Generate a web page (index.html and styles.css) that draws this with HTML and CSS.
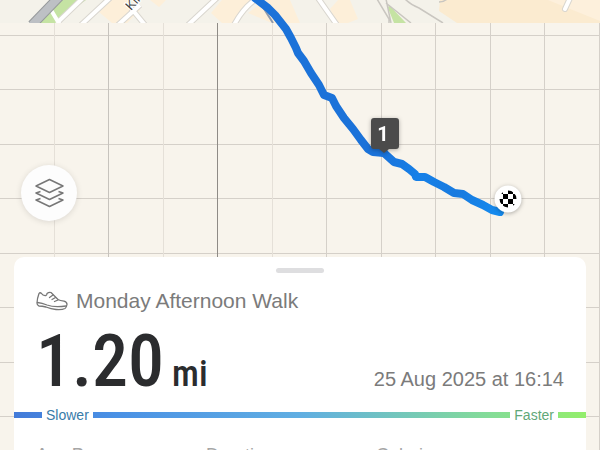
FILE: index.html
```html
<!DOCTYPE html>
<html lang="en">
<head>
    <meta charset="UTF-8">
    <meta name="viewport" content="width=device-width, initial-scale=1.0">
    <title>Monday Afternoon Walk</title>
    <link rel="stylesheet" href="styles.css">
</head>
<body>
    <div class="screen">
        <svg class="map" viewBox="0 0 600 450" preserveAspectRatio="xMidYMin slice" role="img" aria-label="Route map">
            <defs>
                <clipPath id="tiles"><rect width="600" height="23"/></clipPath>
                <linearGradient id="pace" gradientUnits="userSpaceOnUse" x1="380" y1="150" x2="500" y2="212">
                    <stop offset="0" stop-color="#1a72da"/>
                    <stop offset="0.35" stop-color="#1680e8"/>
                    <stop offset="0.65" stop-color="#187adf"/>
                    <stop offset="1" stop-color="#158bef"/>
                </linearGradient>
                <clipPath id="flag"><circle cx="508" cy="199" r="8.5"/></clipPath>
            </defs>
            <rect width="600" height="450" fill="#f8f4ec"/>

            <!-- grid -->
            <g stroke="#d5d0c9" stroke-width="1">
                <path d="M0 35.5H600M0 89.5H600M0 144.5H600M0 198.5H600M0 253.5H600M0 307.5H600M0 362.5H600M0 416.5H600"/>
                <path d="M326.5 23V450M381.5 23V450M435.5 23V450M490.5 23V450M544.5 23V450M599.5 23V450"/>
                <path stroke="#e5e0d8" d="M54.5 23V450M163.5 23V450M272.5 23V450"/>
                <path stroke="#c7c3bd" d="M108.5 23V450"/>
                <path stroke="#8f8b86" d="M217.5 23V450"/>
            </g>

            <!-- streets -->
            <g clip-path="url(#tiles)">
                <rect width="600" height="23" fill="#f4f2ea"/>
                <path fill="#fdefd9" d="M112 0H130L140 10 127 23H112L99 12ZM150 0H166L159 7ZM222 0H254L232 23H222L211 13ZM265 0H290L300 23H272L248 13ZM338 0H350L358 19 348 23H337L330 9Z"/>
                <path fill="#fbebd0" d="M440 0H600V23H457L439 11Z"/>
                <path fill="#fdf0dc" d="M548 0H600V21Z"/>
                <path fill="#c5e3a3" d="M61 0H86L55 23H39ZM389 5L406 23H394L388 8Z"/>
                <g fill="none" stroke="#d9d6cf" stroke-width="6">
                    <path d="M85 -4L57 23M110 -2L81 25M140 5L118 25M131 8L145 25M219 -4L188 25M256 -1Q243 8 234 25M318 -2Q327 11 337 25"/>
                    <path stroke-linecap="round" d="M571 -4L565 9"/>
                </g>
                <g fill="none" stroke="#fff" stroke-width="4">
                    <path d="M51 10L60 25M85 -4L57 23M110 -2L81 25M140 5L118 25M131 8L145 25M219 -4L188 25M256 -1Q243 8 234 25M318 -2Q327 11 337 25"/>
                    <path stroke-linecap="round" d="M571 -4L565 9"/>
                </g>
                <path fill="none" stroke="#96999b" stroke-width="10" d="M60 -4L32 25"/>
                <path fill="none" stroke="#bdc0c4" stroke-width="8" d="M60 -4L32 25"/>
                <path fill="none" stroke="#c9c6c0" stroke-width="1.5" d="M377 -1L389 19V23M386 -1L391 23M386 3L411 23M405 -1Q411 5 419 8L443 23M439 2Q444 2 447 -1"/>
                <path fill="none" stroke="#8f9aac" stroke-width="2" d="M261 4L273 23"/>
                <text class="street" transform="translate(131 11) rotate(-48)">Kin</text>
            </g>

            <!-- walked route -->
            <g fill="none" stroke-width="8" stroke-linecap="round" stroke-linejoin="round">
                <path stroke="#1b72d9" d="M255 -2L268 8 275 15 286 29 291 38 296 48 298 53 304 61 311 73 319 85 324 95 332 98 336 106 344 118 353 129 361 140 368 149 373 152 384 153"/>
                <path stroke="url(#pace)" d="M384 153L394 162 402 164 409 169 415 174 416 177 425 177 434 182 444 187 454 193 463 194 472 200 483 205 492 210 500 212"/>
            </g>

            <g class="pin">
                <path fill="#4b4b4b" d="M374 118H396Q399 118 399 121V146Q399 149 396 149H389L384 153 379 149H374Q371 149 371 146V121Q371 118 374 118Z"/>
                <text class="pin-text" x="383" y="141" text-anchor="middle">1</text>
            </g>
            <g class="pin">
                <circle cx="508" cy="199" r="13.5" fill="#fff"/>
            </g>
            <g clip-path="url(#flag)">
                <path fill="#000" d="M498 189h5v5h-5zM508 189h5v5h-5zM503 194h5v5h-5zM513 194h5v5h-5zM498 199h5v5h-5zM508 199h5v5h-5zM503 204h5v5h-5zM513 204h5v5h-5z"/>
            </g>
        </svg>

        <button class="layers" type="button" aria-label="Map layers">
            <svg viewBox="0 0 56 56" fill="none" stroke="#777" stroke-width="1.5" stroke-linejoin="round">
                <path d="M28.500 14.500L42 21 28.500 27.500 15 21Z"/>
                <path d="M19.500 26.500L15 28 28.500 34.500 42 28 37.500 26.500"/>
                <path d="M19.500 33.500L15 35 28.500 41.500 42 35 37.500 33.500"/>
            </svg>
        </button>

        <main class="sheet">
            <div class="handle"></div>
            <div class="title">
                <svg class="shoe" viewBox="0 0 32 20" fill="none" stroke="#777" stroke-width="1.3" stroke-linecap="round" stroke-linejoin="round">
                    <path d="M3 2.500Q4 1 5.500 2.500 7 5 10 4.500 11 4 11 2.500 13 .8 15 1.500L22 8.500Q24 9.500 28 10.200 31 11 31 13.500 30.500 16.500 29 17.500 26 19 20 18.500 15 18 10 16 6 15 3 15 1 14.500 1 12 1 8 3 2.500Z"/>
                    <path d="M1.500 11.500Q6 12 11 14 18 16.500 30 15M13.500 6.500L17 4M16 8.500L19.500 6.500M18.500 10.500L22 9"/>
                </svg>
                <h1>Monday Afternoon Walk</h1>
            </div>
            <div class="summary">
                <p class="distance"><span>1.20</span> <span class="unit">mi</span></p>
                <time class="date" datetime="2025-08-25T16:14">25 Aug 2025 at 16:14</time>
            </div>
            <div class="pace">
                <span class="slower">Slower</span>
                <span class="faster">Faster</span>
            </div>
            <div class="stats">
                <span>Avg Pace</span>
                <span>Duration</span>
                <span>Calories</span>
            </div>
        </main>
    </div>
</body>
</html>
```
FILE: styles.css
```css
* {
    box-sizing: border-box;
    margin: 0;
    padding: 0;
}

body {
    font-family: "Liberation Sans", Arial, sans-serif;
    background-color: #f8f4ec;
    color: #7b7b7b;
}

.screen {
    position: relative;
    height: 100vh;
    overflow: hidden;
    padding: 165px 14px 0;
}

.map {
    position: absolute;
    top: 0;
    left: 0;
    width: 100%;
    height: 100%;
}

.street {
    font-size: 13px;
    fill: #444;
    stroke: #fff;
    stroke-width: 2px;
    paint-order: stroke;
}

.pin {
    filter: drop-shadow(0 1px 2px rgba(0, 0, 0, 0.3));
}

.pin-text {
    font-family: Roboto, sans-serif;
    font-size: 20px;
    font-weight: bold;
    fill: #fff;
}

.layers {
    position: relative;
    display: block;
    width: 56px;
    height: 56px;
    margin: 0 0 36px 7px;
    border: none;
    border-radius: 50%;
    background: #fdfdfd;
    box-shadow: 0 1px 6px rgba(0, 0, 0, 0.12);
    cursor: pointer;
}

.layers svg {
    display: block;
}

.sheet {
    position: relative;
    background: #fff;
    border-radius: 10px 10px 0 0;
    padding-top: 11px;
}

.handle {
    width: 48px;
    height: 5px;
    margin: 0 auto;
    border-radius: 3px;
    background: #dedee0;
}

.title {
    display: flex;
    align-items: center;
    gap: 8px;
    padding: 16px 22px 0;
}

.shoe {
    width: 32px;
    height: 20px;
}

.title h1 {
    font-size: 21px;
    line-height: 24px;
    font-weight: normal;
}

.summary {
    display: flex;
    justify-content: space-between;
    align-items: baseline;
    padding: 9px 22px 0;
}

.distance {
    display: flex;
    align-items: baseline;
    gap: 8px;
    font-family: "Roboto Condensed", "Liberation Sans Narrow", Roboto, sans-serif;
    font-size: 72px;
    line-height: 80px;
    font-weight: 500;
    color: #2b2c2e;
}

.unit {
    font-size: 36px;
    line-height: 36px;
}

.date {
    font-size: 20px;
}

.pace {
    display: flex;
    justify-content: space-between;
    align-items: center;
    height: 20px;
    margin-top: 3px;
    padding: 0 28px;
    background: linear-gradient(to right, #437bd9, #4a91e5 18%, #60aee2 50%, #84dc98 83%, #93ee6b) center / 100% 6px no-repeat;
}

.pace span {
    padding: 0 4px;
    background: #fff;
    font-size: 14px;
    line-height: 20px;
}

.slower {
    color: #397ba9;
}

.faster {
    color: #61a878;
}

.stats {
    display: grid;
    grid-template-columns: repeat(3, 1fr);
    padding: 18px 40px 0 22px;
    font-size: 18px;
    line-height: 24px;
    color: #a6a6a6;
}
```
